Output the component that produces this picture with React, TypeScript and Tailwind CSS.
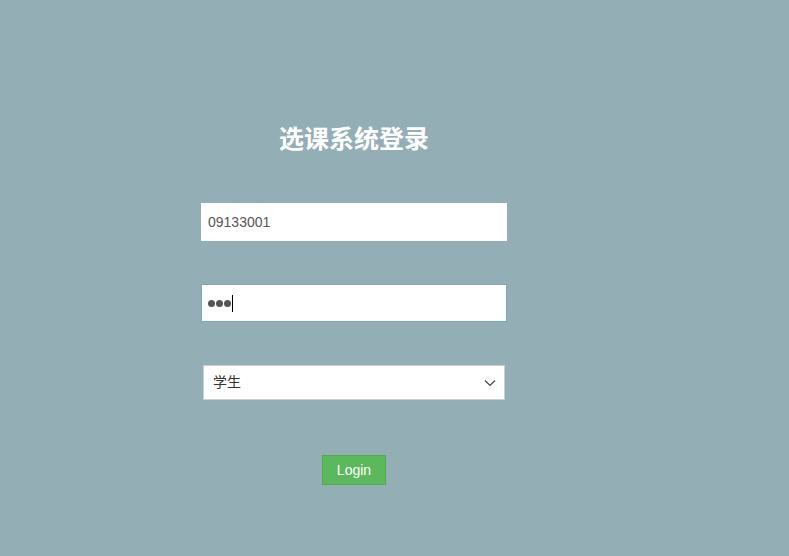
import React from "react";

export default function App() {
  return (
    <div
      className="w-[789px] h-[556px] bg-[#94aeb6] overflow-hidden"
      style={{ fontFamily: '"Liberation Sans", Arial, "Noto Sans CJK SC", sans-serif' }}
    >
      <div className="ml-[201px] w-[306px] pt-[124px] flex flex-col">
        <h1 className="h-[30px] text-center text-[25px] leading-[30px] font-bold text-white">
          选课系统登录
        </h1>
        <div className="mt-[49px] h-[38px] bg-white flex items-center pl-[7px] text-[14px] text-[#555]">
          09133001
        </div>
        <div className="mt-[43px] h-[38px] bg-white border border-[#7fa6ba] flex items-center pl-[6px]">
          <span className="flex gap-[1px] items-center">
            <span className="w-[7px] h-[7px] rounded-full bg-[#555]" />
            <span className="w-[7px] h-[7px] rounded-full bg-[#555]" />
            <span className="w-[7px] h-[7px] rounded-full bg-[#555]" />
          </span>
          <span className="ml-[1px] w-px h-[17px] bg-black" />
        </div>
        <div className="mt-[43px] mx-[2px] h-[35px] bg-white border border-[#c8cfd1] flex items-center justify-between pl-[9px] pr-[8px] text-[14px] text-[#333]">
          <span>学生</span>
          <svg width="12" height="8" viewBox="0 0 12 8" fill="none" stroke="#444" strokeWidth="1.2">
            <path d="M1 1.5 L6 6.5 L11 1.5" />
          </svg>
        </div>
        <div className="mt-[55px] flex justify-center">
          <button className="w-[64px] h-[30px] bg-[#5cb85c] border border-[#4cae4c] text-white text-[14px] leading-none">
            Login
          </button>
        </div>
      </div>
    </div>
  );
}
